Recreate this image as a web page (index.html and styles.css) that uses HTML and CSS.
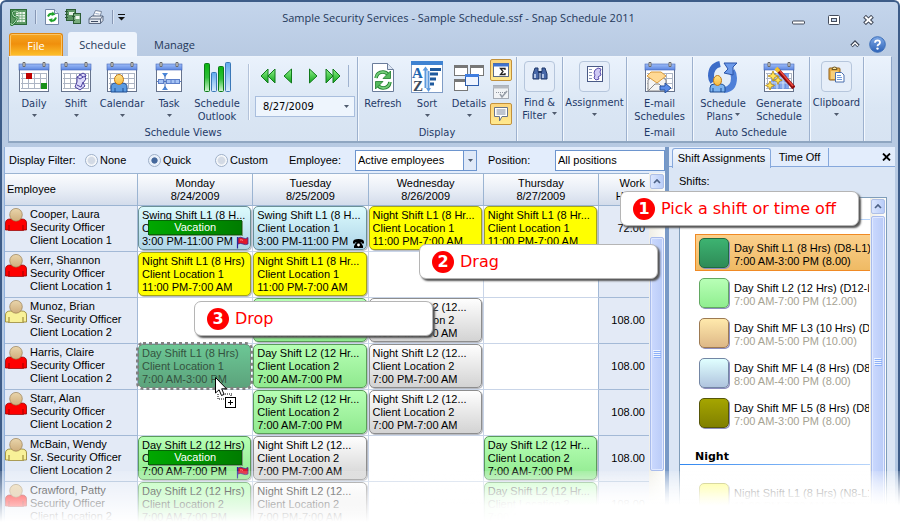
FILE: index.html
```html
<!DOCTYPE html>
<html lang="en">
<head>
<meta charset="utf-8">
<title>Sample Security Services - Sample Schedule.ssf - Snap Schedule 2011</title>
<link rel="stylesheet" href="styles.css">
</head>
<body>
<svg class="defs" aria-hidden="true">
  <defs>
    <linearGradient id="g-bar" x1="0" y1="0" x2="0" y2="1"><stop offset="0" stop-color="#9dbcf8"/><stop offset="1" stop-color="#5c86e0"/></linearGradient>
    <linearGradient id="g-green" x1="0" y1="0" x2="0" y2="1"><stop offset="0" stop-color="#8ff08a"/><stop offset="1" stop-color="#0fa51a"/></linearGradient>
    <linearGradient id="g-col" x1="0" y1="0" x2="0" y2="1"><stop offset="0" stop-color="#0ab50f"/><stop offset=".5" stop-color="#2fbf3a"/><stop offset="1" stop-color="#d6f6d6"/></linearGradient>
    <linearGradient id="g-colb" x1="0" y1="0" x2="0" y2="1"><stop offset="0" stop-color="#5fa8ee"/><stop offset="1" stop-color="#d9ecfd"/></linearGradient>
    <linearGradient id="g-head" x1="0" y1="0" x2="0" y2="1"><stop offset="0" stop-color="#e9d5ab"/><stop offset="1" stop-color="#cfae7c"/></linearGradient>
    <linearGradient id="g-help" x1="0" y1="0" x2="0" y2="1"><stop offset="0" stop-color="#7fa9e6"/><stop offset="1" stop-color="#2c62b8"/></linearGradient>
    <linearGradient id="g-face" x1="0" y1="0" x2="0" y2="1"><stop offset="0" stop-color="#ffe38a"/><stop offset="1" stop-color="#f7b93c"/></linearGradient>
  </defs>
  <symbol id="calendar" viewBox="0 0 32 32">
    <rect x="1.500" y="3.500" width="29" height="27" fill="#fff" stroke="#66738c"/>
    <rect x="1" y="3" width="30" height="6" fill="url(#g-bar)" stroke="#4466b8" stroke-width=".6"/>
    <path d="M3 12.500h26M3 17.500h26M3 22.500h26M3 27.500h26M4.500 12v16M10.500 12v16M16.500 12v16M22.500 12v16M28.500 12v16" stroke="#adb5c4" fill="none"/>
    <path d="M5 1.500h2v4h-2zM25 1.500h2v4h-2z" fill="#e4e4e4" stroke="#6b6b6b"/>
  </symbol>
  <symbol id="down" viewBox="0 0 5 3"><path d="M0 0h5L2.500 3z" fill="#4f5b6e"/></symbol>
  <symbol id="person-red" viewBox="0 0 22 23">
    <path d="M.5 22V15q0-4 5-4h11q5 0 5 4v7h-3v.6H3.500V22z" fill="#fe0000" stroke="#960000" stroke-width=".8"/>
    <path d="M4 22v-5M18 22v-5" stroke="#a00000"/>
    <ellipse cx="11" cy="6.800" rx="6.300" ry="6.400" fill="url(#g-head)" stroke="#8d7042" stroke-width=".6"/>
  </symbol>
  <symbol id="person-gold" viewBox="0 0 22 23">
    <path d="M.5 22V15q0-4 5-4h11q5 0 5 4v7h-3v.6H3.500V22z" fill="#f8f198" stroke="#8f7c28" stroke-width=".8"/>
    <path d="M4 22v-5M18 22v-5" stroke="#8f7c28"/>
    <ellipse cx="11" cy="6.800" rx="6.300" ry="6.400" fill="url(#g-head)" stroke="#8d7042" stroke-width=".6"/>
  </symbol>
  <symbol id="flag" viewBox="0 0 13 13">
    <path d="M1.500 1v11.500" stroke="#25259a" stroke-width="1.200"/>
    <path d="M2 2q2.500-1.500 5 0t5-.5v6.500q-2.500 1.200-5 0t-5 0z" fill="#e0182c" stroke="#3a2a90" stroke-width=".8"/>
    <path d="M4 4q1.500-.6 3 .4" stroke="#ff8f8f" fill="none"/>
  </symbol>
  <symbol id="chev-up" viewBox="0 0 16 16"><path d="M4 10l4-4 4 4" stroke="#4d6185" stroke-width="2.200" fill="none"/></symbol>
  <symbol id="grip" viewBox="0 0 8 8"><path d="M0 .5h7M0 2.500h7M0 4.500h7M0 6.500h7" stroke="#eef4fe"/><path d="M1 1.500h7M1 3.500h7M1 5.500h7M1 7.500h7" stroke="#8cb0f8"/></symbol>
</svg>

<div class="window">
  <header class="titlebar">
    <div class="quick">
      <svg width="17" height="17" viewBox="0 0 17 17"><rect x=".5" y=".5" width="16" height="15" fill="#5d9a64" stroke="#2c6a38"/><rect x="6" y="3" width="9" height="10" fill="#eaf5ea"/><path d="M6 5.500h9M6 8h9M6 10.500h9M9 3v10M12 3v10" stroke="#6da877" stroke-width=".8"/><path d="M8 2.500Q2 1 2.500 4.500T6 8t-1 5-4 1" stroke="#2a7a38" stroke-width="2.600" fill="none"/><path d="M8 2.500Q2 1 2.500 4.500T6 8t-1 5-4 1" stroke="#b9e0bd" stroke-width="1" fill="none"/></svg>
      <i class="qsep"></i>
      <svg width="14" height="16" viewBox="0 0 14 16"><path d="M.5.500h9l4 4v11H.5z" fill="#fff" stroke="#7488a8"/><path d="M9.500.500v4h4" fill="#dfe8f5" stroke="#7488a8"/><path d="M3 7.500q1.500-3.500 5-2.500M11 8.500q-1.500 4-5 3" stroke="#1fa32a" stroke-width="2" fill="none"/><path d="M7.500 2.500l3 3-4 1.500zM6.500 13.500l-3-3 4-1.200z" fill="#1fa32a"/></svg>
      <svg width="17" height="16" viewBox="0 0 17 16"><rect x="1.500" y=".5" width="9" height="11" fill="#5e9765" stroke="#2c5c35"/><rect x="4" y="3" width="5" height="3" fill="#e8f3e8"/><path d="M0 2.500h3M0 5.500h3M0 8.500h3" stroke="#2c5c35"/><rect x="8.500" y="4.500" width="7" height="10" fill="#79ad7e" stroke="#2c5c35"/><rect x="10.500" y="7" width="4" height="3" fill="#f2f8f2"/><path d="M7 7.500h3M7 11.500h3" stroke="#2c5c35"/></svg>
      <svg width="16" height="15" viewBox="0 0 16 15"><path d="M5 6l2.500-5.500 6 1L12 7z" fill="#fff" stroke="#76859d"/><path d="M1 8.500l3-2.500h11v4.500l-2.500 3H1z" fill="#e3e8ef" stroke="#5a6880"/><path d="M1 9h11.500v4.500M12.500 9L15 6" stroke="#5a6880" fill="none"/><path d="M3 11.500h7" stroke="#3f4c63"/><path d="M7.500 3.500l4 .6" stroke="#9eb0cc"/></svg>
      <i class="qsep"></i>
      <svg class="qmore" width="7" height="7" viewBox="0 0 7 7"><path d="M0 .5h7" stroke="#111"/><path d="M0 3h7L3.500 6.500z" fill="#111"/></svg>
    </div>
    <h1>Sample Security Services - Sample Schedule.ssf - Snap Schedule 2011</h1>
    <div class="winbtns">
      <button aria-label="Minimize"><svg width="13" height="10" viewBox="0 0 13 10"><rect x=".5" y="6" width="12" height="3" rx="1" fill="#fff" stroke="#444c5c"/></svg></button>
      <button aria-label="Restore"><svg width="12" height="10" viewBox="0 0 12 10"><rect x=".5" y=".5" width="11" height="9" rx="1" fill="#fff" stroke="#444c5c"/><rect x="3.500" y="3.500" width="5" height="3" fill="#c3d3e9" stroke="#444c5c"/></svg></button>
      <button aria-label="Close"><svg width="11" height="10" viewBox="0 0 11 10"><path d="M1.500 1.200l8 7.500M9.500 1.200l-8 7.500" stroke="#444c5c" stroke-width="4"/><path d="M2.200 1.800l6.600 6.300M8.800 1.800L2.200 8.100" stroke="#fff" stroke-width="2"/></svg></button>
    </div>
  </header>

  <nav class="tabs">
    <button class="file">File</button>
    <button class="tab active">Schedule</button>
    <button class="tab">Manage</button>
    <span class="grow"></span>
    <svg width="10" height="8" viewBox="0 0 10 8"><path d="M1.500 6L5 2.500 8.500 6" stroke="#3d4657" stroke-width="3.400" fill="none"/><path d="M2 5.700L5 2.800l3 2.900" stroke="#fff" stroke-width="1.400" fill="none"/></svg>
    <svg width="17" height="17" viewBox="0 0 17 17"><circle cx="8.500" cy="8.500" r="7.800" fill="url(#g-help)" stroke="#3d6fb8"/><path d="M6 6.800q0-2.500 2.500-2.500T11 6.500Q11 8 9.500 8.600 8.500 9.100 8.500 10.200" stroke="#fff" stroke-width="1.800" fill="none"/><circle cx="8.500" cy="12.600" r="1.200" fill="#fff"/></svg>
  </nav>

  <section class="ribbon">
    <div class="group g-views">
      <div class="tools">
        <button class="big w42"><svg width="32" height="32"><use href="#calendar"/><rect x="8" y="12" width="6" height="6" fill="#c00000"/><rect x="23" y="22" width="6" height="6" fill="#189018"/></svg>Daily<svg class="dd"><use href="#down"/></svg></button>
        <button class="big w42"><svg width="32" height="32"><use href="#calendar"/><path d="M17 16l6-4 3 2-1 3 1 1-3 4 2 3-5 4-5-3 2-5z" fill="#dcd9fa" stroke="#4b3f9e"/><path d="M17 16l3 2 5-3M17 24l4 2 2-5M19 13l4 3" stroke="#4b3f9e" fill="none"/></svg>Shift<svg class="dd"><use href="#down"/></svg></button>
        <button class="big w50"><svg width="32" height="32"><use href="#calendar"/><path d="M5 31v-5q0-4 5-4h6q5 0 5 4v5z" fill="#5c9be0" stroke="#1c4c92"/><path d="M9 31v-4M17 31v-4" stroke="#1c4c92"/><ellipse cx="13" cy="18.500" rx="4.500" ry="5" fill="url(#g-face)" stroke="#c07a18"/></svg>Calendar<svg class="dd"><use href="#down"/></svg></button>
        <button class="big w44"><svg width="28" height="32" viewBox="0 0 28 32"><rect x="1.500" y="3.500" width="25" height="27" fill="#fff" stroke="#66738c"/><rect x="1" y="3" width="26" height="6" fill="url(#g-bar)" stroke="#4466b8" stroke-width=".6"/><path d="M5 1.500h2v4h-2zM21 1.500h2v4h-2z" fill="#e4e4e4" stroke="#6b6b6b"/><path d="M2 20.500h24" stroke="#5c7fc8"/><rect x="3.500" y="18.500" width="5" height="4" fill="#a5c3f5" stroke="#5c7fc8"/><rect x="11.500" y="18.500" width="13" height="4" fill="#a5c3f5" stroke="#5c7fc8"/><path d="M16 18v5M20 18v5" stroke="#5c7fc8"/><path d="M7 12h6l-3 4zM7 29h6l-3-4z" fill="#4a86d8"/><path d="M10 14v13" stroke="#3c6ab8"/></svg>Task<svg class="dd"><use href="#down"/></svg></button>
        <button class="big w52"><svg width="28" height="32" viewBox="0 0 28 32"><rect x="1.500" y="2.500" width="5" height="28" rx="1" fill="url(#g-col)" stroke="#0c7a18"/><rect x="8.500" y="11.500" width="5" height="19" rx="1" fill="url(#g-colb)" stroke="#3a78b8"/><rect x="15.500" y="5.500" width="5" height="25" rx="1" fill="url(#g-col)" stroke="#0c7a18"/><rect x="22.500" y="1.500" width="5" height="29" rx="1" fill="url(#g-colb)" stroke="#3a78b8"/></svg>Schedule<br>Outlook</button>
        <i class="vsep"></i>
        <div class="nav">
          <div class="arrows">
            <button aria-label="First"><svg width="16" height="16" viewBox="0 0 16 16"><path d="M8 1v14L1 8zM15 1v14L8 8z" fill="url(#g-green)" stroke="#117a1b"/></svg></button>
            <button aria-label="Previous"><svg width="10" height="16" viewBox="0 0 10 16"><path d="M8.500 1v14L1 8z" fill="url(#g-green)" stroke="#117a1b"/></svg></button>
            <button class="fwd" aria-label="Next"><svg width="10" height="16" viewBox="0 0 10 16"><path d="M1.500 1v14L9 8z" fill="url(#g-green)" stroke="#117a1b"/></svg></button>
            <button aria-label="Last"><svg width="16" height="16" viewBox="0 0 16 16"><path d="M1 1v14l7-7zM8 1v14l7-7z" fill="url(#g-green)" stroke="#117a1b"/></svg></button>
            <i class="ssep"></i>
          </div>
          <label class="date"><input type="text" value="8/27/2009" aria-label="Date"><svg class="dd"><use href="#down"/></svg></label>
        </div>
      </div>
      <div class="glabel">Schedule Views</div>
    </div>
    <div class="group g-display">
      <div class="tools">
        <button class="big w48"><svg width="24" height="32" viewBox="0 0 24 32"><path d="M1.500 2.500h15l6 6v22h-21z" fill="#fff" stroke="#6a7c9a"/><path d="M16.500 2.500v6h6" fill="#dfe8f5" stroke="#6a7c9a"/><path d="M5 17q1-6 7-6 3 0 5 2.500M19 21q-1 6-7 6-3 0-5-2.500" stroke="#1d7e2b" stroke-width="3.600" fill="none"/><path d="M5 17q1-6 7-6 3 0 5 2.500M19 21q-1 6-7 6-3 0-5-2.500" stroke="#74cc78" stroke-width="1.800" fill="none"/><path d="M19.500 10v7.500H12zM4.500 28v-7.500H12z" fill="#55b95c" stroke="#1d7e2b" stroke-width=".8"/></svg>Refresh</button>
        <button class="big w42"><svg width="32" height="32" viewBox="0 0 32 32"><rect x=".5" y=".5" width="31" height="31" fill="#fff" stroke="#7f9cc6"/><rect width="32" height="4" fill="#3f83d2"/><text class="az" x="1" y="17" fill="#1f66b0">A</text><text class="az" x="2" y="30" fill="#3a4b60">Z</text><path d="M14.500 9v18M17.500 10v18" stroke="#5c9ade" stroke-width="2"/><path d="M11.500 9.500l3-4 3 4zM15 27l2.500 4 2.500-4z" fill="#5c9ade"/><path d="M19 8.500h11M19 13h8M19 18h6M19 23h4" stroke="#1f5a9e" stroke-width="3"/></svg>Sort<svg class="dd"><use href="#down"/></svg></button>
        <button class="big w42"><svg width="32" height="32" viewBox="0 0 32 32"><g fill="#fff" stroke="#777"><rect x="1.500" y="4.500" width="13" height="10"/><rect x="17.500" y="4.500" width="13" height="10"/><rect x="1.500" y="18.500" width="13" height="11"/></g><path d="M1 5.500h14M17 5.500h14M1 19.500h14" stroke="#777" stroke-width="3"/><rect x="12.500" y="13.500" width="13" height="11" fill="#eef4ff" stroke="#2d5dae"/><path d="M12 14.500h14" stroke="#3f7de0" stroke-width="3"/></svg>Details<svg class="dd"><use href="#down"/></svg></button>
        <div class="toggles">
          <button class="on" aria-label="Summary"><svg width="16" height="14" viewBox="0 0 16 14"><rect x=".5" y=".5" width="15" height="13" fill="#fff" stroke="#5b6b85"/><path d="M0 2h16" stroke="#3f73d0" stroke-width="3"/><path d="M12 7V5.500H7.500L10 8.500 7.500 11.500H12V10" stroke="#222" stroke-width="1.300" fill="none"/></svg></button>
          <button aria-label="Requests"><svg width="16" height="14" viewBox="0 0 16 14"><rect x=".5" y=".5" width="15" height="13" fill="#f1f3f5" stroke="#a3a9b3"/><path d="M0 2h16" stroke="#b4b9c1" stroke-width="3"/><path d="M3 7.500h9" stroke="#8e949e" stroke-dasharray="1 1"/><path d="M7 9l2 3 5-6" stroke="#979da7" stroke-width="1.500" fill="none"/></svg></button>
          <button class="on" aria-label="Notes"><svg width="16" height="16" viewBox="0 0 16 16"><path d="M1.500 1.500h13v9H9L6.500 15v-4.500h-5z" fill="#fff" stroke="#67748a"/><path d="M3.500 4h9M3.500 6h9M3.500 8h9" stroke="#7f8ba0"/></svg></button>
        </div>
      </div>
      <div class="glabel">Display</div>
    </div>
    <div class="group w46">
      <button class="folded"><span class="box"><svg width="16" height="16" viewBox="0 0 16 16"><path d="M3 2h3v3l1 2v6H1V8zM10 2h3l2 6v5H9V7l1-2z" fill="#4868a8" stroke="#1f3768"/><path d="M3 8v4M11 8v4" stroke="#cfdcf3" stroke-width="1.600"/><path d="M6 6h4" stroke="#1f3768" stroke-width="2"/></svg></span>Find &amp;<br>Filter <svg class="dd inl"><use href="#down"/></svg></button>
    </div>
    <div class="group w64">
      <button class="folded"><span class="box"><svg width="16" height="16" viewBox="0 0 16 16"><rect x=".5" y=".5" width="15" height="15" fill="#fff" stroke="#4a5a86"/><path d="M2 3.500h3M2 6.500h3M2 9.500h3M2 12.500h3" stroke="#8a98bc"/><path d="M8 4l3-2 3 1-1 3 1 3-3 2 1 2-3 1-2-2 1-3-1-2z" fill="#cfcaf5" stroke="#5b4fae"/></svg></span>Assignment<svg class="dd"><use href="#down"/></svg></button>
    </div>
    <div class="group w66">
      <div class="tools center">
        <button class="big w60"><svg width="32" height="32"><use href="#calendar"/><path d="M4 19l9-7 9 7v11H4z" fill="#f4f4f4" stroke="#888"/><path d="M3 15l4-4h10l5 4-9 7z" fill="#ffd994" stroke="#d89a3c"/><path d="M4 30l7-7h4l7 7" fill="none" stroke="#888"/><path d="M16 25h5v-3l6 5-6 5v-3h-5z" fill="#5a8ce8" stroke="#24509e"/></svg>E-mail<br>Schedules</button>
      </div>
      <div class="glabel">E-mail</div>
    </div>
    <div class="group w117">
      <div class="tools center">
        <button class="big w56"><svg width="32" height="32" viewBox="0 0 32 32"><path d="M13 3Q4 5 4 15q0 3 2 6" stroke="#3c6cc8" stroke-width="6" fill="none"/><path d="M17 29q10-1 10-12 0-4-2-7" stroke="#4f80d8" stroke-width="6" fill="none"/><path d="M17 2h13l-4 4v8l-9-2 4-4z" fill="#6c9aea" stroke="#2c55a8"/><path d="M3 31v-4q0-4 4-4h6q5 0 5 4v4z" fill="#7db4f0" stroke="#1c4c92"/><path d="M6 31v-4M14 31v-4" stroke="#1c4c92"/><ellipse cx="10.500" cy="19.500" rx="4" ry="5" fill="url(#g-face)" stroke="#c07a18"/></svg>Schedule<br>Plans<svg class="dd inl"><use href="#down"/></svg></button>
        <button class="big w56"><svg width="32" height="32"><use href="#calendar"/><path d="M8 12h18v16H8z" fill="#5d8be6" opacity=".75"/><path d="M8 17h18M8 22h18M14 12v16M20 12v16" stroke="#d6e4fb"/><g fill="#ffe45a" stroke="#b98a10" stroke-width=".8"><path d="M10 10l1.500 3.500L15 15l-3.500 1.500L10 20l-1.500-3.500L5 15l3.500-1.500z"/><path d="M15 15l1.200 3 3 1.200-3 1.200-1.200 3-1.200-3-3-1.200 3-1.200z"/><path d="M7 20l1.300 3.200 3.200 1.300-3.200 1.300L7 29l-1.300-3.200-3.200-1.300 3.200-1.300z"/></g><path d="M14 8l17 19" stroke="#8e0c0c" stroke-width="4"/><path d="M17 10l13 15" stroke="#ee4a40" stroke-width="1.600"/><path d="M13 7l3 3.500" stroke="#f4c22c" stroke-width="4"/></svg>Generate<br>Schedule</button>
      </div>
      <div class="glabel">Auto Schedule</div>
    </div>
    <div class="group w54">
      <button class="folded"><span class="box"><svg width="17" height="17" viewBox="0 0 17 17"><rect x="1" y="2" width="11" height="12" rx="1" fill="#e9b04a" stroke="#92611a"/><path d="M4 3.500q0-2.500 2.500-2.500T9 3.500z" fill="#f7e5a0" stroke="#6c5420"/><rect x="3" y="5" width="7" height="8" fill="#f7cf7c"/><path d="M7.500 6.500h6l2.500 2.500v7H7.500z" fill="#fff" stroke="#4a6fae"/><path d="M9 9.500h4M9 11.500h5M9 13.500h5" stroke="#6f9bdc"/></svg></span>Clipboard<svg class="dd"><use href="#down"/></svg></button>
    </div>
    <div class="group rest"></div>
  </section>

  <main class="workspace">
    <section class="board">
      <form class="filter">
        <span class="flabel">Display Filter:</span>
        <label class="r1"><input type="radio" name="f">None</label>
        <label class="r2"><input type="radio" name="f" checked>Quick</label>
        <label class="r3"><input type="radio" name="f">Custom</label>
        <label class="emp" for="emp">Employee:</label>
        <span class="combo"><select id="emp"><option>Active employees</option></select><span class="btn"><svg class="dd"><use href="#down"/></svg></span></span>
        <label class="pos" for="pos">Position:</label>
        <select class="cut" id="pos"><option>All positions</option></select>
      </form>
      <div class="gridwrap">
        <table>
          <colgroup><col class="c-emp"><col><col><col><col><col class="c-work"></colgroup>
          <thead>
            <tr><th class="left">Employee</th><th>Monday<br>8/24/2009</th><th>Tuesday<br>8/25/2009</th><th>Wednesday<br>8/26/2009</th><th>Thursday<br>8/27/2009</th><th class="right">Work<br>Hours</th></tr>
          </thead>
          <tbody>
            <tr>
              <td class="who"><div><svg><use href="#person-red"/></svg><p>Cooper, Laura<br>Security Officer<br>Client Location 1</p></div></td>
              <td><div class="card aqua">Swing Shift L1 (8 H...<br>Client Location 1<br>3:00 PM-11:00 PM<span class="vac">Vacation</span><svg class="mark"><use href="#flag"/></svg></div></td>
              <td><div class="card aqua">Swing Shift L1 (8 H...<br>Client Location 1<br>3:00 PM-11:00 PM<svg class="mark" viewBox="0 0 13 13"><path d="M1 6Q1 3 6.500 3T12 6v1.500H9.500V6h-6v1.500H1z"/><path d="M4.500 6h4l2.500 4v2H2v-2z"/><circle cx="6.500" cy="9" r="1.400" fill="#fff"/></svg></div></td>
              <td><div class="card yellow">Night Shift L1 (8 Hr...<br>Client Location 1<br>11:00 PM-7:00 AM</div></td>
              <td><div class="card yellow">Night Shift L1 (8 Hr...<br>Client Location 1<br>11:00 PM-7:00 AM</div></td>
              <td class="work">72.00</td>
            </tr>
            <tr>
              <td class="who"><div><svg><use href="#person-red"/></svg><p>Kerr, Shannon<br>Security Officer<br>Client Location 1</p></div></td>
              <td><div class="card yellow">Night Shift L1 (8 Hrs)<br>Client Location 1<br>11:00 PM-7:00 AM</div></td>
              <td><div class="card yellow">Night Shift L1 (8 Hr...<br>Client Location 1<br>11:00 PM-7:00 AM</div></td>
              <td></td><td></td><td class="work"></td>
            </tr>
            <tr>
              <td class="who"><div><svg><use href="#person-gold"/></svg><p>Munoz, Brian<br>Sr. Security Officer<br>Client Location 2</p></div></td>
              <td></td>
              <td><div class="card green">Day Shift L2 (12 Hr...<br>Client Location 2<br>7:00 AM-7:00 PM</div></td>
              <td><div class="card gray">Night Shift L2 (12...<br>Client Location 2<br>7:00 PM-7:00 AM</div></td>
              <td></td><td class="work">108.00</td>
            </tr>
            <tr>
              <td class="who"><div><svg><use href="#person-red"/></svg><p>Harris, Claire<br>Security Officer<br>Client Location 2</p></div></td>
              <td><div class="card ghost">Day Shift L1 (8 Hrs)<br>Client Location 1<br>7:00 AM-3:00 PM
                <svg class="cursor" viewBox="0 0 23 32" aria-hidden="true"><path d="M4 22h7M8 17h9M3 17v5M16 18v2" stroke="#000" stroke-dasharray="1 1" fill="none"/><path d="M.5.500v15.500l3.600-3.200 2.400 5.700 2.600-1.100-2.400-5.600h4.800z" fill="#fff" stroke="#000"/><rect x="10.500" y="20.500" width="10" height="10" fill="#fff" stroke="#000"/><path d="M13 25.500h5M15.500 23v5" stroke="#000"/></svg></div></td>
              <td><div class="card green">Day Shift L2 (12 Hr...<br>Client Location 2<br>7:00 AM-7:00 PM</div></td>
              <td><div class="card gray">Night Shift L2 (12...<br>Client Location 2<br>7:00 PM-7:00 AM</div></td>
              <td></td><td class="work">108.00</td>
            </tr>
            <tr>
              <td class="who"><div><svg><use href="#person-red"/></svg><p>Starr, Alan<br>Security Officer<br>Client Location 2</p></div></td>
              <td></td>
              <td><div class="card green">Day Shift L2 (12 Hr...<br>Client Location 2<br>7:00 AM-7:00 PM</div></td>
              <td><div class="card gray">Night Shift L2 (12...<br>Client Location 2<br>7:00 PM-7:00 AM</div></td>
              <td></td><td class="work">108.00</td>
            </tr>
            <tr>
              <td class="who"><div><svg><use href="#person-gold"/></svg><p>McBain, Wendy<br>Sr. Security Officer<br>Client Location 2</p></div></td>
              <td><div class="card green">Day Shift L2 (12 Hrs)<br>Client Location 2<br>7:00 AM-7:00 PM<span class="vac">Vacation</span><svg class="mark"><use href="#flag"/></svg></div></td>
              <td><div class="card gray">Night Shift L2 (12...<br>Client Location 2<br>7:00 PM-7:00 AM</div></td>
              <td></td>
              <td><div class="card green">Day Shift L2 (12 Hr...<br>Client Location 2<br>7:00 AM-7:00 PM</div></td>
              <td class="work">108.00</td>
            </tr>
            <tr>
              <td class="who"><div><svg><use href="#person-red"/></svg><p>Crawford, Patty<br>Security Officer<br>Client Location 2</p></div></td>
              <td><div class="card green">Day Shift L2 (12 Hrs)<br>Client Location 2<br>7:00 AM-7:00 PM</div></td>
              <td><div class="card gray">Night Shift L2 (12...<br>Client Location 2<br>7:00 PM-7:00 AM</div></td>
              <td></td>
              <td><div class="card green">Day Shift L2 (12 Hr...<br>Client Location 2<br>7:00 AM-7:00 PM</div></td>
              <td class="work">108.00</td>
            </tr>
          </tbody>
        </table>
        <div class="scroll">
          <button aria-label="Scroll up"><svg width="14" height="14"><use href="#chev-up"/></svg></button>
          <div class="thumb t-board"><svg width="8" height="8"><use href="#grip"/></svg></div>
        </div>
      </div>
    </section>
    <div class="splitter"></div>
    <aside class="side">
      <div class="stabs">
        <button class="stab active">Shift Assignments</button>
        <button class="stab">Time Off</button>
        <span class="grow"></span>
        <button class="x" aria-label="Close panel"><svg width="9" height="8" viewBox="0 0 9 8"><path d="M1 .5l7 7M8 .5l-7 7" stroke="#000" stroke-width="1.800"/></svg></button>
      </div>
      <div class="shifts">Shifts:</div>
      <div class="listbox">
        <div class="list">
          <h2 class="day">Day</h2>
          <ul>
            <li class="sel"><i class="sw s1"></i><p>Day Shift L1 (8 Hrs) (D8-L1)<br><span>7:00 AM-3:00 PM (8.00)</span></p></li>
            <li><i class="sw s2"></i><p>Day Shift L2 (12 Hrs) (D12-L<br><span>7:00 AM-7:00 PM (12.00)</span></p></li>
            <li><i class="sw s3"></i><p>Day Shift MF L3 (10 Hrs) (D<br><span>7:00 AM-5:00 PM (10.00)</span></p></li>
            <li><i class="sw s4"></i><p>Day Shift MF L4 (8 Hrs) (D8l<br><span>8:00 AM-4:00 PM (8.00)</span></p></li>
            <li><i class="sw s5"></i><p>Day Shift MF L5 (8 Hrs) (D8l<br><span>7:00 AM-3:00 PM (8.00)</span></p></li>
          </ul>
          <h2>Night</h2>
          <ul>
            <li><i class="sw s6"></i><p>Night Shift L1 (8 Hrs) (N8-L1<br><span>11:00 PM-7:00 AM (8.00)</span></p></li>
          </ul>
        </div>
        <div class="scroll">
          <button aria-label="Scroll up"><svg width="14" height="14"><use href="#chev-up"/></svg></button>
          <div class="thumb t-side"><svg width="8" height="8"><use href="#grip"/></svg></div>
        </div>
      </div>
    </aside>
  </main>

  <div class="callout one"><b>1</b>Pick a shift or time off</div>
  <div class="callout two"><b>2</b>Drag</div>
  <div class="callout three"><b>3</b>Drop</div>
</div>
<div class="fade"></div>
</body>
</html>
```
FILE: styles.css
```css
* { box-sizing: border-box; }
body { position: relative; margin: 0; background: #fff; color: #000; font: 11px/13px "Liberation Sans", Arial, sans-serif; }
p, h1, h2, ul { margin: 0; padding: 0; }
ul { list-style: none; }
svg { display: block; flex: none; }
button { font: inherit; color: inherit; background: none; border: 0; padding: 0; margin: 0; white-space: nowrap; }
.defs { position: absolute; width: 0; height: 0; }
.grow { flex: 1; }

.window {
  position: relative; height: 100vh; overflow: hidden;
  display: flex; flex-direction: column;
  border: solid #3d5c88; border-width: 2px 2px 0; border-radius: 6px 6px 0 0;
  background: linear-gradient(#c4d5ec, #b8cae2 56px, #b4c9e4);
}

/* Title bar */
.titlebar { display: flex; align-items: center; height: 30px; padding: 0 24px 0 8px; color: #24385a; }
.titlebar h1 { flex: 1; text-align: center; font: 11px/15px "Open Sans", "Noto Sans", sans-serif; white-space: nowrap; }
.quick { display: flex; align-items: center; gap: 6px; }
.qsep { width: 2px; height: 14px; margin: 0 2px; background: #8797b4; border-right: 1px solid #dbe6f5; }
.qmore { margin-left: -4px; }
.winbtns { display: flex; gap: 23px; padding-top: 6px; }

/* Ribbon tabs */
.tabs { display: flex; align-items: center; height: 24px; padding: 0 12px 0 7px; font: 11px/15px "Open Sans", "Noto Sans", sans-serif; color: #24385a; }
.tabs > svg + svg { margin-left: 9px; }
.file { width: 54px; height: 23px; align-self: flex-end; margin-right: 5px; color: #fff; border: 1px solid #e0860e; border-bottom: 0; border-radius: 3px 3px 0 0; background: linear-gradient(#f5a623, #f08f0c 45%, #fdc22c); box-shadow: inset 0 0 0 1px #fbc566; }
.tab { height: 24px; width: 69px; }
.tab + .tab { width: 75px; }
.tab.active { background: #eef4fc; border-radius: 3px 3px 0 0; }

/* Ribbon */
.ribbon { display: flex; height: 87px; flex: none; margin: 0 6px; border: 1px solid #8ea6c8; border-top-color: #eef4fc; border-bottom: 2px solid #8fa6c1; background: linear-gradient(#eaf2fc, #dae6f4 60%, #d7e3f2); font-family: "DejaVu Sans Condensed", "Open Sans", sans-serif; color: #1f3a68; line-height: 13px; }
.group { display: flex; flex-direction: column; flex: none; border-right: 1px solid #9db1ce; box-shadow: 1px 0 #f3f8fe; }
.group.rest { flex: 1; border-right: 0; box-shadow: none; }
.g-views { width: 349px; }
.g-display { width: 159px; }
.w46 { width: 46px; }
.w64 { width: 64px; }
.w66 { width: 66px; }
.w117 { width: 117px; }
.w54 { width: 54px; }
.tools { display: flex; height: 68px; padding: 4px 0 0 4px; }
.tools.center { justify-content: center; padding-left: 0; }
.g-display .tools { padding-left: 2px; }
.glabel { text-align: center; height: 16px; line-height: 16px; }
.big { text-align: center; align-self: flex-start; flex: none; }
.big > svg:first-child { margin: 0 auto 4px; }
.w42 { width: 42px; }
.w44 { width: 44px; }
.w48 { width: 46px; }
.w50 { width: 50px; }
.w52 { width: 52px; }
.w56 { width: 56px; }
.w60 { width: 60px; }
.az { font: bold 15px "Liberation Serif", serif; }
.dd { width: 5px; height: 3px; margin: 4px auto 0; }
.dd.inl { display: inline-block; margin: 0 0 4px 2px; }
.vsep { width: 2px; height: 56px; margin: 3px 5px 0; background: #b3c2d9; border-right: 1px solid #f6faff; }
.nav { padding-top: 4px; }
.arrows { display: flex; gap: 7px; padding-left: 5px; height: 31px; }
.arrows button { align-self: flex-start; padding-top: 3px; }
.arrows .fwd { margin-left: 8px; }
.ssep { width: 1px; height: 22px; background: #9fb2cf; }
.date { display: flex; align-items: center; width: 100px; height: 21px; border: 1px solid #a9bedd; background: #eef5fd; padding-right: 5px; }
.date input { width: 80px; flex: 1; border: 0; padding: 0 0 0 7px; background: none; font: inherit; color: #000; }
.date .dd { margin: 0; }
.toggles { display: flex; flex-direction: column; align-items: center; margin-top: -2px; }
.toggles button { display: grid; place-items: center; width: 22px; height: 22px; border-radius: 2px; }
.toggles .on { border: 1px solid #c2913c; background: linear-gradient(#fcd57c, #ffe98e); }
.folded { padding-top: 4px; text-align: center; }
.box { display: flex; justify-content: center; width: 31px; height: 31px; margin: 0 auto 4px; padding-top: 4px; border: 1px solid #b6c6dc; border-radius: 4px; background: #e6eef9; }

/* Workspace */
.workspace { flex: 1; min-height: 0; display: grid; grid-template-columns: minmax(0, 1fr) 4px 226px; margin: 4px 3px 0 2px; background: #dbe6f5; border-left: 1px solid #8fb0dc; }
.board { display: flex; flex-direction: column; min-width: 0; overflow: hidden; background: #fff; }
.filter { display: flex; align-items: center; height: 26px; flex: none; padding-left: 4px; background: #e3edfc; white-space: nowrap; overflow: hidden; }
.filter label { display: flex; align-items: center; flex: none; }
.flabel { width: 76px; flex: none; }
.filter input { appearance: none; width: 13px; height: 13px; margin: 0 2px 0 0; border-radius: 50%; border: 1px solid #9fb0c8; background: radial-gradient(#d3dae5 40%, #f8fafc 60%); }
.filter input:checked { background: radial-gradient(#45689c 35%, #e9f0fa 45%); }
.r1 { width: 63px; }
.r2 { width: 67px; }
.r3 { width: 74px; }
.filter .emp { width: 66px; }
.filter select { appearance: none; height: 21px; border: 1px solid #6d95ce; border-radius: 0; background: #fff; color: #000; font: inherit; padding: 0 2px; margin: 0; }
.combo { display: flex; width: 122px; flex: none; position: relative; }
.combo select { width: 100%; }
.combo .btn { position: absolute; right: 1px; top: 1px; width: 13px; height: 19px; border-left: 1px solid #6d95ce; background: #dfe9f8; pointer-events: none; }
.combo .dd { margin-top: 8px; }
.filter .pos { width: 78px; padding-left: 11px; }
.filter .cut { flex: 1 0 90px; }

.gridwrap { display: flex; flex: 1; align-items: stretch; }
table { flex: 1; width: 0; height: 1px; table-layout: fixed; border-spacing: 0; border-top: 1px solid #9bb4d2; }
.c-emp { width: 133px; }
.c-work { width: 50px; }
th { height: 32px; padding: 0; font-weight: normal; border: solid #9bb4d2; border-width: 0 1px 1px 0; background: linear-gradient(#fbfcfe, #e9eef6 50%, #d3dceb); }
th.left { text-align: left; padding-left: 2px; }
th.right, td.work { text-align: right; padding-right: 4px; border-right: 0; }
td { height: 46px; padding: 0; vertical-align: top; border: solid #c9d5e8; border-width: 0 1px 1px 0; background: #fff; white-space: nowrap; }
td.who, td.work { background: #e3eaf6; border-color: #a3b9d6; }
td.work { vertical-align: middle; }
td:nth-child(5) { border-right-color: #a3b9d6; }
.who div { display: flex; gap: 3px; padding-top: 2px; }
.who svg { width: 22px; height: 23px; }
.card { position: relative; height: 44px; margin-right: 1px; padding: 2px 0 0 3px; border: 1px solid #888; border-radius: 5px; box-shadow: 1px 1px 0 #b9bcc4; }
.aqua { background: linear-gradient(#dcfbfd, #afd5e8); border-color: #6a9097; }
.yellow { background: #ff0; border-color: #a3a31c; }
.green { background: linear-gradient(#b6ffb4, #90e98f); border-color: #5a9b5a; }
.gray { background: linear-gradient(#fefefe, #d3d3d3); border-color: #8d8d8d; }
.ghost { background: linear-gradient(#6cc795, #5ca37c); border-color: #5f9a7b; color: #34533f; outline: 3px dotted #808080; outline-offset: -1px; box-shadow: none; }
.vac { position: absolute; left: 9px; right: 8px; top: 13px; height: 15px; line-height: 13px; border: 1px solid #066406; background: linear-gradient(90deg, #00a800, #007c00); color: #fff; text-align: center; box-shadow: 1px 1px #7c9a7c; }
.mark { position: absolute; right: 1px; bottom: 0; width: 13px; height: 13px; }
.cursor { position: absolute; left: 76px; top: 32px; width: 23px; height: 32px; z-index: 2; }

.scroll { width: 16px; flex: none; display: flex; flex-direction: column; background: linear-gradient(90deg, #efeee6, #fdfdfa); padding: 1px; }
.scroll button { width: 14px; height: 15px; border: 1px solid #aebfe6; border-radius: 2px; background: linear-gradient(90deg, #dbe6fe, #b9cdf8); }
.scroll button svg { width: 12px; height: 13px; }
.thumb { display: grid; place-items: center; flex: none; border: 1px solid #a9bcec; border-radius: 2px; background: linear-gradient(90deg, #cbd9fe, #b9cbf7); box-shadow: inset 0 0 0 1px #dfe8ff; }
.t-board { height: 234px; margin-top: 48px; }
.t-side { height: 292px; margin-top: 2px; }
.splitter { background: #7899c6; }

/* Side panel */
.side { display: flex; flex-direction: column; min-height: 0; min-width: 0; background: #dbe6f5; }
.stabs { display: flex; align-items: center; height: 20px; flex: none; padding: 1px 4px 0 3px; background: #e3edfc; border-bottom: 1px solid #86a8dc; }
.stab { height: 19px; }
.stab.active { width: 99px; height: 20px; margin-bottom: -1px; border: 1px solid #86a8dc; border-bottom: 0; border-radius: 3px 3px 0 0; background: linear-gradient(#f4f9ff, #dbe6f5); }
.stab + .stab { width: 58px; border-right: 1px solid #86a8dc; }
.shifts { padding: 8px 0 9px 10px; }
.listbox { flex: 1; min-height: 0; display: flex; margin: 0 8px 0 10px; border: 1px solid #7f9db9; background: #fff; }
.list { flex: 1; min-width: 0; overflow: hidden; }
h2 { font: bold 11px/13px "DejaVu Sans", sans-serif; padding: 16px 0 2px 15px; background: linear-gradient(90deg, #2f86f0, #b9d5fa) bottom / 100% 1px no-repeat; }
.day { padding-top: 7px; }
.list ul { padding: 13px 0 0 15px; }
.list h2 + ul { padding-top: 14px; }
li { display: flex; align-items: center; gap: 5px; height: 37px; margin-bottom: 3px; padding: 0 0 0 3px; border: 1px solid transparent; white-space: nowrap; overflow: hidden; }
li p { padding-top: 5px; }
li span { color: #a5a292; }
.sel { border-color: #f08a24; border-right: 0; background: linear-gradient(#fbd08c, #efba64); }
.sel span { color: #000; }
.sw { flex: none; width: 30px; height: 30px; border: 1px solid #333; border-radius: 5px; box-shadow: 1px 1px #8f8fc0; }
.s1 { background: linear-gradient(#3db371, #2e8b57); border-color: #1f6b40; }
.s2 { background: linear-gradient(#b8ffb6, #90ee90); border-color: #62a862; }
.s3 { background: linear-gradient(#ffe9ac, #deb887); border-color: #9d7a52; }
.s4 { background: linear-gradient(#e0ffff, #b0c4de); border-color: #7386a4; }
.s5 { background: linear-gradient(#a5a500, #808000); border-color: #565608; }
.s6 { background: linear-gradient(#ffff50, #ffff00); border-color: #a3a31c; }

/* Instruction callouts */
.callout { position: absolute; display: flex; align-items: center; width: 239px; height: 35px; padding-left: 12px; gap: 6px; border: 1px solid #b5b5b5; border-radius: 7px; background: #fff; box-shadow: 2px 2px 2px #555; color: #f00; font: 16px/20px "DejaVu Sans", Verdana, sans-serif; white-space: nowrap; z-index: 3; }
.callout b { display: grid; place-items: center; width: 22px; height: 22px; border-radius: 50%; background: #f00; color: #fff; }
.one { right: 39px; top: 189px; }
.two { left: 417px; top: 242px; }
.three { left: 192px; top: 299px; }

/* Bottom fade-out, quicker towards the right */
.fade { position: absolute; left: 0; right: 0; bottom: 0; height: 54px; z-index: 4; background: linear-gradient(rgba(255, 255, 255, .15), #fff 51px); }
.fade::after { content: ""; position: absolute; inset: 0; background: linear-gradient(transparent, #fff 35px); mask-image: linear-gradient(90deg, transparent 38%, #000 58%); }
```
